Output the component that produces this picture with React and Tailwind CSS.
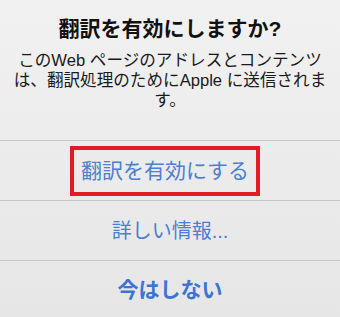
import React from 'react';

const font = { fontFamily: '"Liberation Sans", "Noto Sans CJK JP", sans-serif' };

export default function App() {
  return (
    <div
      className="w-[340px] h-[317px] overflow-hidden bg-gradient-to-b from-[#f1f1f1] to-[#e6e6e6] text-center"
      style={font}
    >
      {/* Header */}
      <div className="h-[140px] pt-[16px]">
        <h1 className="text-[21px] leading-[26px] font-bold text-[#111] whitespace-nowrap">翻訳を有効にしますか?</h1>
        <p className="mt-[9px] text-[16.6px] leading-[20px] text-[#1a1a1a] whitespace-nowrap">
          このWeb ページのアドレスとコンテンツ
          <br />
          は、翻訳処理のためにApple に送信されま
          <br />
          す。
        </p>
      </div>

      {/* Actions */}
      <div className="border-t border-[#c6c6c6] h-[60px] flex items-center justify-center">
        <span className="inline-flex items-center h-[50px] px-[7px] mr-[10px] border-4 border-[#e31b23] text-[21px] leading-none text-[#4a7fd2] whitespace-nowrap">
          翻訳を有効にする
        </span>
      </div>
      <div className="border-t border-[#c6c6c6] h-[60px] flex items-center justify-center">
        <span className="text-[20px] leading-none text-[#4a7fd2] whitespace-nowrap">詳しい情報...</span>
      </div>
      <div className="border-t border-[#c6c6c6] h-[60px] flex items-center justify-center pb-[2px]">
        <span className="text-[21px] leading-none font-bold text-[#3b74d4] whitespace-nowrap">今はしない</span>
      </div>
    </div>
  );
}
